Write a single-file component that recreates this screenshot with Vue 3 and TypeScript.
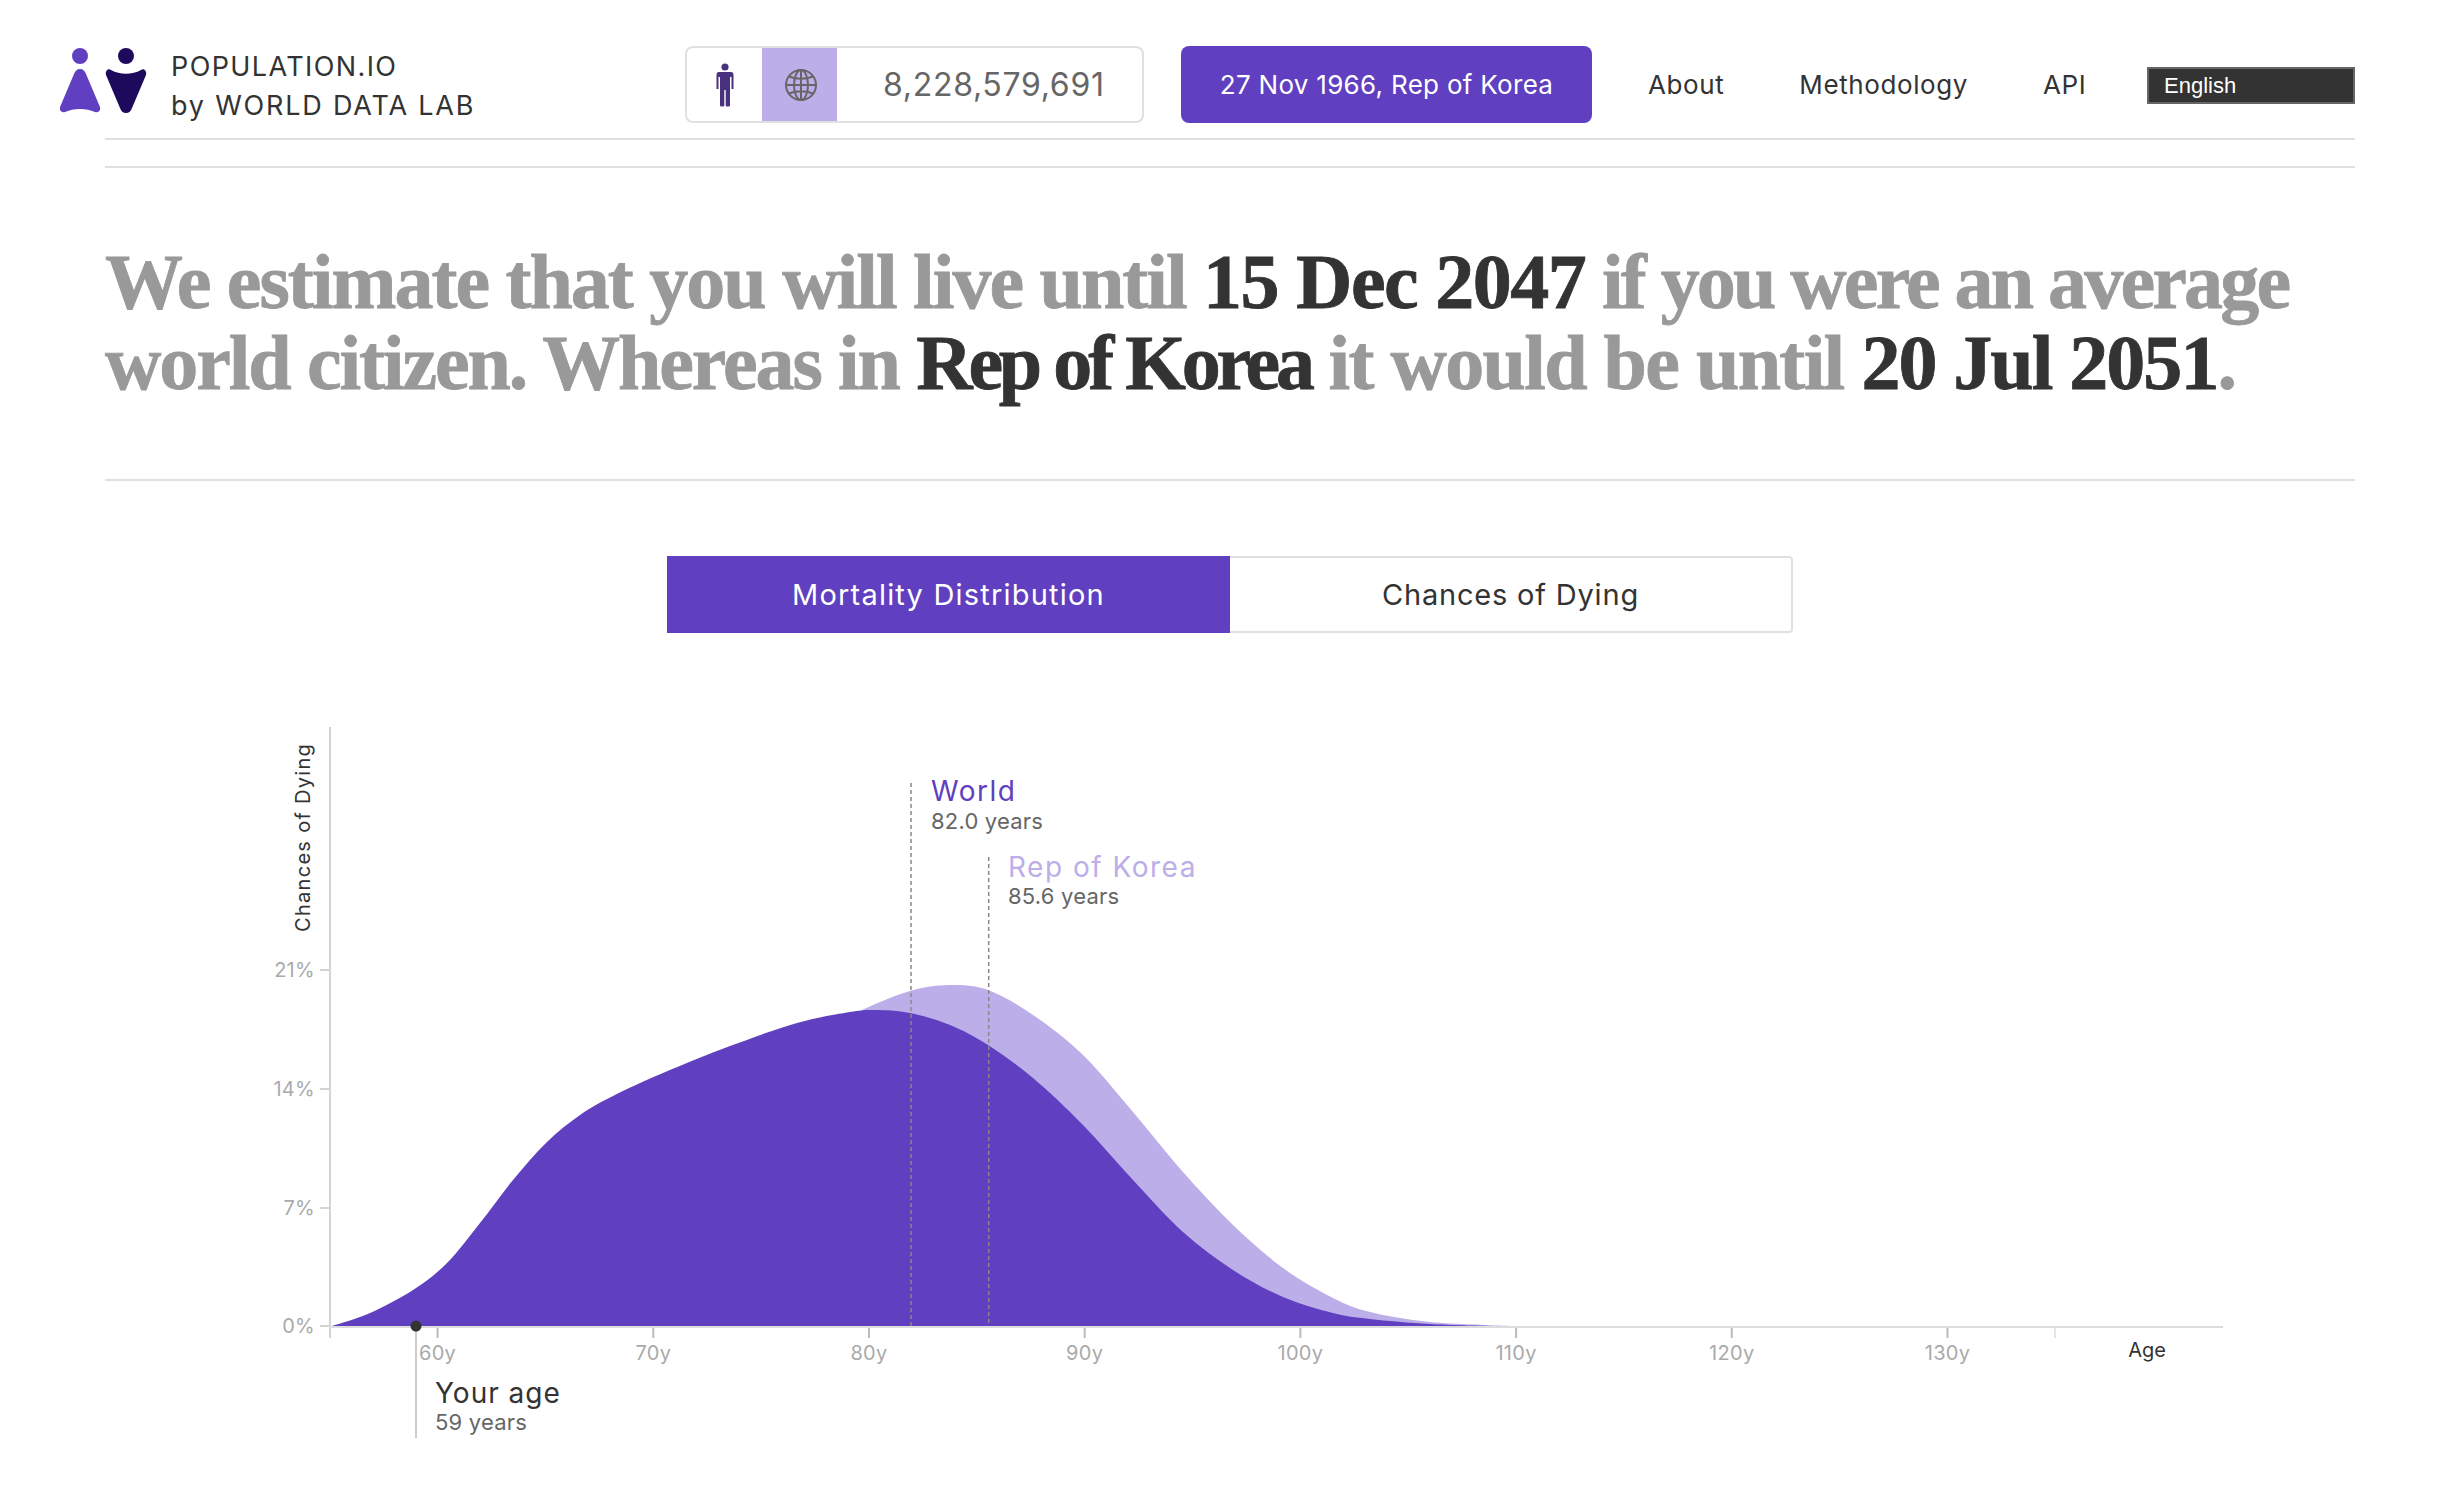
<template>
  <div class="page">
    <header class="topbar">
      <div class="brand">
        <svg class="logo" width="88" height="66" viewBox="0 0 88 66">
          <circle cx="20" cy="9" r="8" fill="#6040c0" />
          <path d="M20 22 C23 22 25 24 26 27 L40 60 C41 64 38 66 35 65 C26 61 14 61 5 65 C2 66 -1 64 0 60 L14 27 C15 24 17 22 20 22 Z" fill="#6040c0" />
          <circle cx="66" cy="9" r="8" fill="#1d0a5c" />
          <path d="M66 66 C63 66 61 64 60 61 L46 28 C45 24 48 21 51 23 C60 28 72 28 81 23 C84 21 87 24 86 28 L72 61 C71 64 69 66 66 66 Z" fill="#1d0a5c" />
        </svg>
        <div class="brand-text">
          <div>POPULATION.IO</div>
          <div class="brand-sub">by WORLD DATA LAB</div>
        </div>
      </div>

      <div class="counter">
        <span class="counter-cell">
          <svg width="20" height="44" viewBox="0 0 20 44">
            <circle cx="10" cy="4" r="3.6" fill="#48317f" />
            <path d="M4 9 H16 Q18.500 9 18.500 12 V26 H16.500 V14 H15 V42.500 Q15 43.500 13.500 43.500 H12 Q10.700 43.500 10.700 42.500 V27 H9.300 V42.500 Q9.300 43.500 8 43.500 H6.500 Q5 43.500 5 42.500 V14 H3.500 V26 H1.500 V12 Q1.500 9 4 9 Z" fill="#48317f" />
          </svg>
        </span>
        <span class="counter-cell counter-cell-active">
          <svg width="34" height="34" viewBox="0 0 34 34" fill="none" stroke="#666" stroke-width="2">
            <circle cx="17" cy="17" r="15" />
            <ellipse cx="17" cy="17" rx="7" ry="15" />
            <path d="M17 2 V32 M2 17 H32 M5 8.500 Q17 13 29 8.500 M5 25.500 Q17 21 29 25.500" />
          </svg>
        </span>
        <span class="counter-value">8,228,579,691</span>
      </div>

      <button class="date-button">27 Nov 1966, Rep of Korea</button>

      <nav class="nav">
        <a v-for="link in links" :key="link">{{ link }}</a>
      </nav>

      <div class="lang">English</div>
    </header>

    <div class="rule rule-gap"></div>

    <section class="headline">
      <h1>
        <span class="fit-a">We estimate that you will live until </span><b class="fit-b">15 Dec 2047</b><span class="fit-c"> if you were an average</span><br />
        <span class="fit-d">world citizen. Whereas in </span><b class="fit-e">Rep of Korea</b><span class="fit-f"> it would be until </span><b class="fit-g">20 Jul 2051</b>.
      </h1>
    </section>

    <div class="tabs">
      <div class="tab tab-active">Mortality Distribution</div>
      <div class="tab">Chances of Dying</div>
    </div>

    <svg class="chart" width="2449" height="802" viewBox="0 700 2449 802">
      <path :d="koreaPath" fill="#bcaee8" />
      <path :d="worldPath" fill="#6040c0" />

      <line x1="330" y1="727" x2="330" y2="1338" stroke="#d4d4d4" stroke-width="2" />
      <line x1="330" y1="1327" x2="2223" y2="1327" stroke="#ddd" stroke-width="2" />

      <g v-for="tick in yTicks" :key="tick.label">
        <line x1="320" :y1="tick.y" x2="330" :y2="tick.y" stroke="#d4d4d4" stroke-width="2" />
        <text class="tick-label" x="315" :y="tick.y + 7" text-anchor="end">{{ tick.label }}</text>
      </g>

      <g v-for="tick in xTicks" :key="tick.label">
        <line :x1="tick.x" y1="1328" :x2="tick.x" y2="1338" stroke="#bbb" stroke-width="2" />
        <text class="tick-label" :x="tick.x" y="1360" text-anchor="middle">{{ tick.label }}</text>
      </g>
      <line x1="2055" y1="1328" x2="2055" y2="1338" stroke="#ccc" />
      <text class="axis-label" x="2147" y="1357" text-anchor="middle">Age</text>
      <text class="axis-label axis-label-wide" transform="translate(310 932) rotate(-90)">Chances of Dying</text>

      <line x1="911" y1="783" x2="911" y2="1326" class="marker" />
      <line x1="988.700" y1="857" x2="988.700" y2="1326" class="marker" />

      <text class="series-name series-name-wide" x="931" y="801" fill="#6040c0">World</text>
      <text class="series-value" x="931" y="829">82.0 years</text>
      <text class="series-name series-name-wide" x="1008" y="877" fill="#bcaee8">Rep of Korea</text>
      <text class="series-value" x="1008" y="904">85.6 years</text>

      <line x1="416" y1="1326" x2="416" y2="1438" stroke="#ccc" stroke-width="2" />
      <circle cx="416" cy="1326" r="5.500" fill="#333" />
      <text class="series-name" x="435" y="1403" fill="#333">Your age</text>
      <text class="series-value" x="435" y="1430">59 years</text>
    </svg>
  </div>
</template>

<script setup lang="ts">
type Point = [number, number];

const links = ['About', 'Methodology', 'API'];

const yTicks = [
  { label: '21%', y: 970 },
  { label: '14%', y: 1089 },
  { label: '7%', y: 1208 },
  { label: '0%', y: 1326 },
];

const xTicks = [60, 70, 80, 90, 100, 110, 120, 130].map((age) => ({
  label: `${age}y`,
  x: 437.6 + (age - 60) * 21.57,
}));

const world: Point[] = [
  [332, 1326], [370, 1313], [413, 1290], [447, 1263], [480, 1223], [513, 1180],
  [547, 1142], [580, 1115], [613, 1096], [663, 1073], [730, 1046], [797, 1023],
  [850, 1012], [875, 1010], [910, 1013], [950, 1025], [988, 1045], [1033, 1078],
  [1083, 1125], [1133, 1180], [1183, 1232], [1233, 1270], [1283, 1297], [1333, 1313],
  [1370, 1319], [1430, 1324], [1490, 1326],
];

const korea: Point[] = [
  [790, 1045], [862, 1010], [910, 991], [950, 985], [988, 990], [1033, 1015],
  [1083, 1055], [1133, 1112], [1183, 1172], [1233, 1225], [1283, 1268], [1333, 1298],
  [1370, 1312], [1430, 1322], [1510, 1326],
];

// catmull-rom through the traced points, closed along the baseline
const toArea = (points: Point[]) => {
  let d = `M${points[0][0]} 1326 L${points[0][0]} ${points[0][1]}`;
  for (let i = 0; i < points.length - 1; i++) {
    const p0 = points[Math.max(i - 1, 0)];
    const p1 = points[i];
    const p2 = points[i + 1];
    const p3 = points[Math.min(i + 2, points.length - 1)];
    const c1x = p1[0] + (p2[0] - p0[0]) / 6;
    const c1y = p1[1] + (p2[1] - p0[1]) / 6;
    const c2x = p2[0] - (p3[0] - p1[0]) / 6;
    const c2y = p2[1] - (p3[1] - p1[1]) / 6;
    d += ` C${c1x} ${c1y} ${c2x} ${c2y} ${p2[0]} ${p2[1]}`;
  }
  return `${d} Z`;
};

const worldPath = toArea(world);
const koreaPath = toArea(korea);
</script>

<style>
body {
  background: #fff;
}
</style>

<style scoped>
.page {
  width: 2449px;
  height: 1502px;
  overflow: hidden;
  padding: 46px 94px 0 105px;
  box-sizing: border-box;
  font-family: Inter, "Noto Sans", sans-serif;
  color: #333;
}

.topbar {
  display: flex;
  align-items: center;
  height: 77px;
  margin-left: -45px;
  position: relative;
  padding-bottom: 17px;
}

.topbar::after {
  content: '';
  position: absolute;
  left: 45px;
  right: 0;
  bottom: 0;
  height: 2px;
  background: #e0e0e0;
}

.brand {
  display: flex;
  align-items: center;
  align-self: stretch;
  gap: 23px;
  width: 625px;
  flex: none;
}

.logo {
  display: block;
  flex: none;
  align-self: flex-start;
  margin-top: 1px;
}

.brand-text {
  padding-top: 2px;
  font-size: 27px;
  line-height: 39px;
  letter-spacing: 1.4px;
  color: #333;
}

.brand-sub {
  letter-spacing: 1.8px;
}

.counter {
  display: flex;
  width: 459px;
  height: 77px;
  box-sizing: border-box;
  border: 2px solid #e0e0e0;
  border-radius: 8px;
  overflow: hidden;
  flex: none;
}

.counter-cell {
  display: flex;
  align-items: center;
  justify-content: center;
  width: 75px;
  flex: none;
}

.counter-cell-active {
  background: #bcaee8;
}

.counter-cell-active svg {
  margin-left: 2px;
}

.counter-value {
  flex: 1;
  padding-left: 46px;
  font-size: 32px;
  line-height: 73px;
  letter-spacing: 0.7px;
  color: #666;
}

.date-button {
  width: 411px;
  height: 77px;
  margin-left: 37px;
  flex: none;
  border: 0;
  border-radius: 8px;
  background: #6040c0;
  color: #fff;
  font: inherit;
  font-size: 26px;
  letter-spacing: 0.3px;
}

.nav {
  display: flex;
  gap: 75px;
  margin-left: 56px;
  font-size: 26px;
  letter-spacing: 0.6px;
  color: #333;
}

.lang {
  margin-left: auto;
  margin-top: 2px;
  width: 208px;
  height: 37px;
  box-sizing: border-box;
  padding-left: 15px;
  border: 2px solid #666;
  background: #333;
  color: #fff;
  font-family: "Liberation Sans", Arial, sans-serif;
  font-size: 22px;
  line-height: 33px;
}

.rule {
  height: 2px;
  background: #e0e0e0;
}

.rule-gap {
  margin-top: 26px;
}

.headline {
  height: 313px;
  padding-top: 73px;
  box-sizing: border-box;
  border-bottom: 2px solid #e0e0e0;
}

h1 {
  margin: 0;
  font-family: "Liberation Serif", serif;
  font-size: 78px;
  line-height: 81px;
  font-weight: 700;
  letter-spacing: -2.2px;
  -webkit-text-stroke: 0.8px currentColor;
  color: #999;
  white-space: nowrap;
}

h1 b {
  color: #333;
}

/* the serif is not the original face, so each run is fitted to its width */
.fit-a { letter-spacing: -2px; }
.fit-b { letter-spacing: -1.5px; }
.fit-c { letter-spacing: -2.8px; }
.fit-d { letter-spacing: -2.1px; }
.fit-e { letter-spacing: -4.2px; }
.fit-f { letter-spacing: -1.7px; }
.fit-g { letter-spacing: -1.9px; }

.tabs {
  display: flex;
  width: 1126px;
  height: 77px;
  margin: 75px auto 0 562px;
  box-sizing: border-box;
  border: 2px solid #e0e0e0;
  border-radius: 4px;
}

.tab {
  flex: 1;
  display: flex;
  align-items: center;
  justify-content: center;
  font-size: 29px;
  letter-spacing: 0.8px;
  color: #333;
}

.tab-active {
  flex: none;
  width: 563px;
  margin: -2px 0 -2px -2px;
  background: #6040c0;
  letter-spacing: 1.2px;
  color: #fff;
}

.chart {
  display: block;
  position: absolute;
  left: 0;
  top: 700px;
}

.tick-label {
  font-size: 20px;
  letter-spacing: 0.3px;
  fill: #aaa;
}

.axis-label {
  font-size: 20px;
  fill: #333;
}

.axis-label-wide {
  letter-spacing: 1.3px;
}

.marker {
  stroke: #888;
  stroke-width: 1.500;
  stroke-dasharray: 4 3;
}

.series-name {
  font-size: 28px;
  letter-spacing: 1px;
}

.series-name-wide {
  letter-spacing: 1.5px;
}

.series-value {
  font-size: 22px;
  letter-spacing: 0.2px;
  fill: #666;
}
</style>
